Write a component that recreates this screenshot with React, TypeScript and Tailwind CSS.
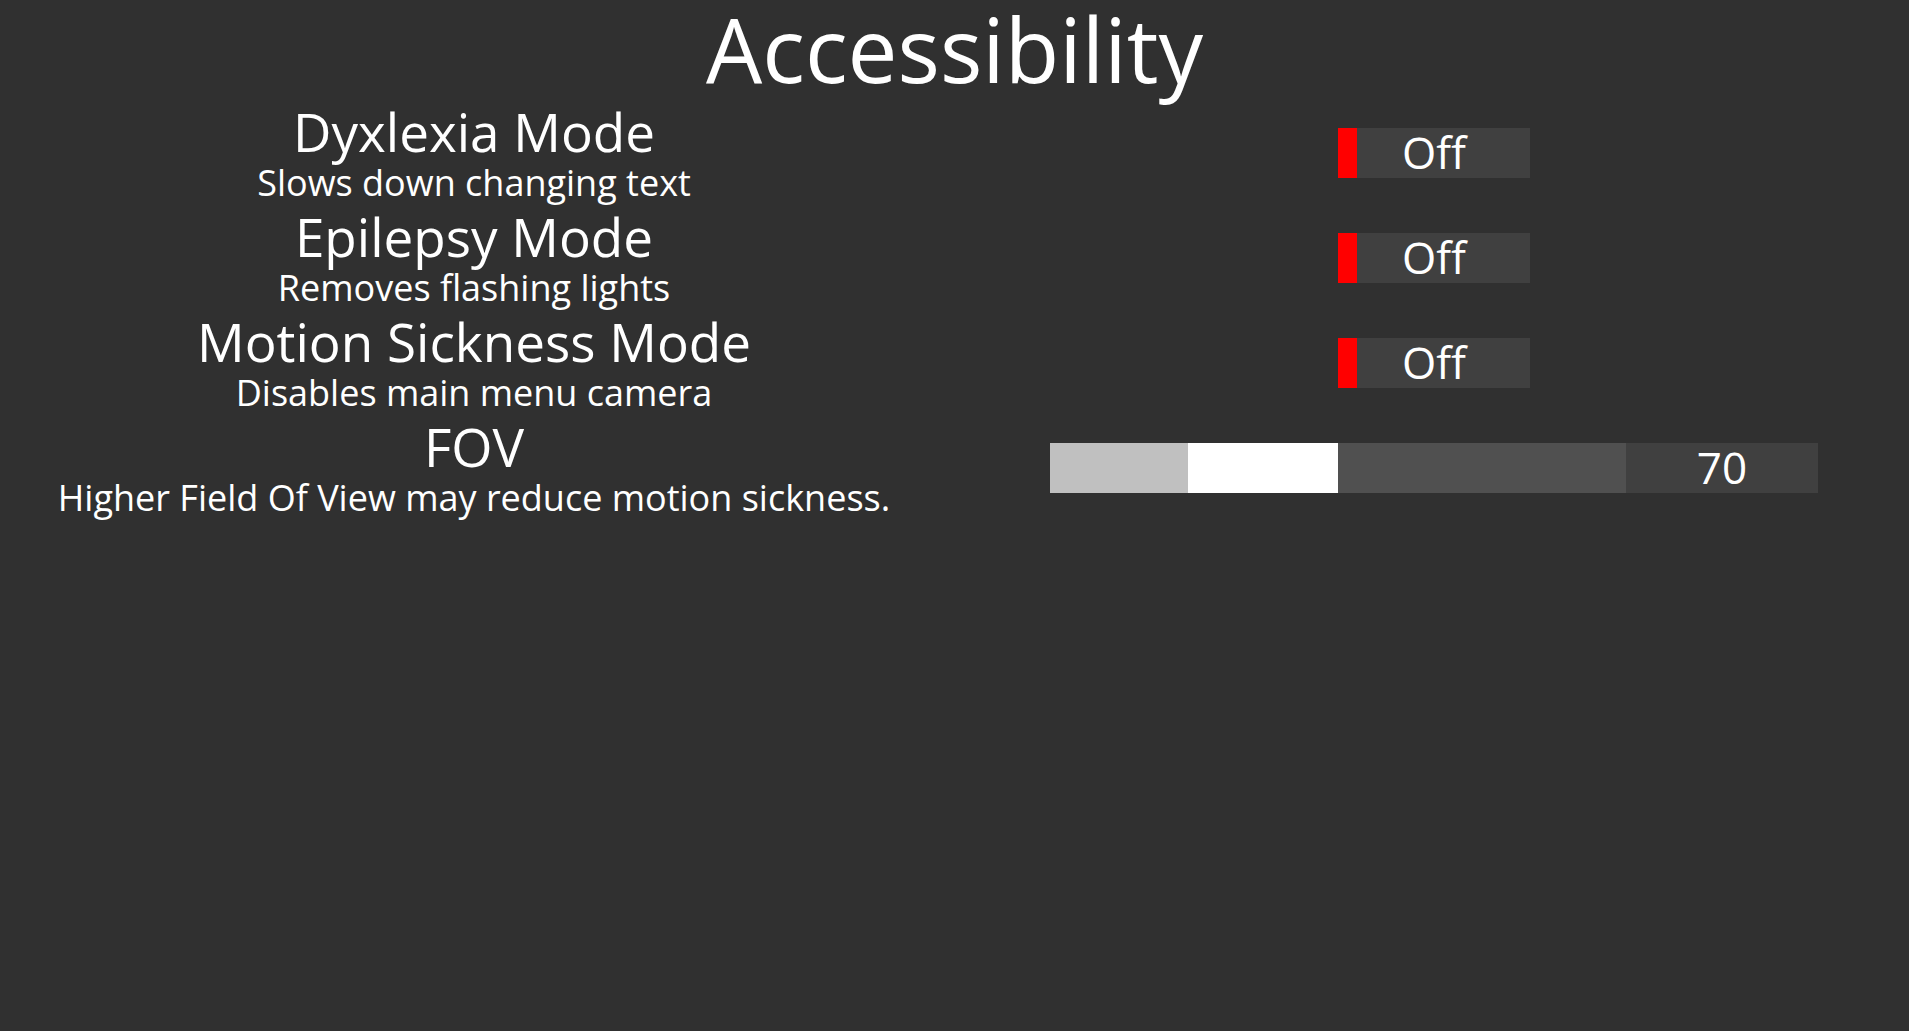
import React from "react";

interface IToggleRow {
	label: string;
	hint: string;
	on: boolean;
}

const rows: IToggleRow[] = [
	{ label: "Dyxlexia Mode", hint: "Slows down changing text", on: false },
	{ label: "Epilepsy Mode", hint: "Removes flashing lights", on: false },
	{ label: "Motion Sickness Mode", hint: "Disables main menu camera", on: false },
];

const Label = ({ label, hint }: { label: string; hint: string }) => (
	<div className="w-[948px] flex flex-col items-center">
		<div className="text-[53px] leading-[52px] whitespace-nowrap">{label}</div>
		<div className="text-[36px] leading-[49px] whitespace-nowrap">{hint}</div>
	</div>
);

const Toggle = ({ on }: { on: boolean }) => (
	<div className="flex w-[192px] h-[50px] bg-[#404040]">
		<div className={on ? "w-[19px] bg-[#00c000]" : "w-[19px] bg-[#ff0000]"} />
		<div className="flex-1 pr-[19px] text-center text-[44px] leading-[48px]">{on ? "On" : "Off"}</div>
	</div>
);

const Slider = ({ value }: { value: number }) => (
	<div className="flex w-[768px] h-[50px]">
		<div className="w-[138px] bg-[#c0c0c0]" />
		<div className="w-[150px] bg-white" />
		<div className="w-[288px] bg-[#505050]" />
		<div className="w-[192px] bg-[#404040] text-center text-[44px] leading-[48px]">{value}</div>
	</div>
);

export default function App() {
	return (
		<div className="w-[1909px] h-[1031px] bg-[#303030] text-white overflow-hidden" style={{ fontFamily: '"Open Sans", "Noto Sans", sans-serif' }}>
			<h1 className="h-[106px] pt-[4px] text-center text-[89px] leading-[90px]">Accessibility</h1>
			{rows.map((row) => (
				<div key={row.label} className="flex h-[105px]">
					<Label label={row.label} hint={row.hint} />
					<div className="w-[768px] ml-[102px] pt-[22px] flex justify-center items-start">
						<Toggle on={row.on} />
					</div>
				</div>
			))}
			<div className="flex h-[105px]">
				<Label label="FOV" hint="Higher Field Of View may reduce motion sickness." />
				<div className="w-[768px] ml-[102px] pt-[22px] flex justify-center items-start">
					<Slider value={70} />
				</div>
			</div>
		</div>
	);
}
